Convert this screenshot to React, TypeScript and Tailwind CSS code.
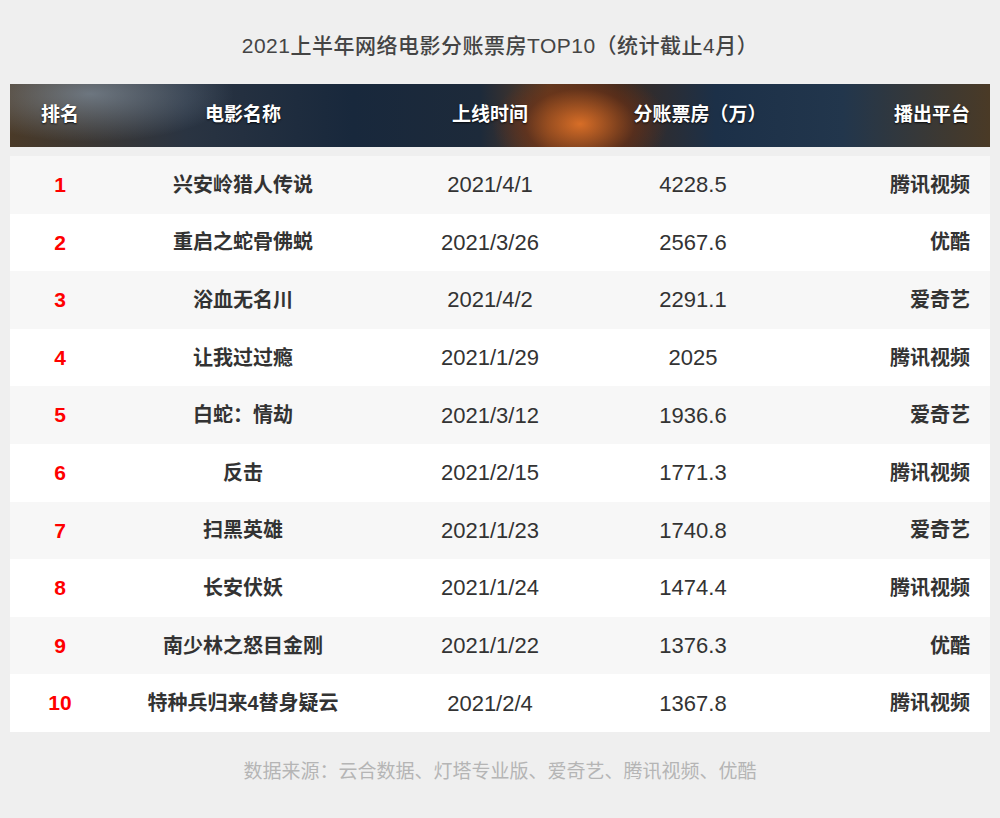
const ROWS: Array<[string, string, string, string]> = [
  ["兴安岭猎人传说", "2021/4/1", "4228.5", "腾讯视频"],
  ["重启之蛇骨佛蜕", "2021/3/26", "2567.6", "优酷"],
  ["浴血无名川", "2021/4/2", "2291.1", "爱奇艺"],
  ["让我过过瘾", "2021/1/29", "2025", "腾讯视频"],
  ["白蛇：情劫", "2021/3/12", "1936.6", "爱奇艺"],
  ["反击", "2021/2/15", "1771.3", "腾讯视频"],
  ["扫黑英雄", "2021/1/23", "1740.8", "爱奇艺"],
  ["长安伏妖", "2021/1/24", "1474.4", "腾讯视频"],
  ["南少林之怒目金刚", "2021/1/22", "1376.3", "优酷"],
  ["特种兵归来4替身疑云", "2021/2/4", "1367.8", "腾讯视频"],
];

const COLS = "grid grid-cols-[100px_266px_228px_178px_1fr] items-center";

export default function App() {
  return (
    <div
      className="w-[1000px] h-[818px] bg-[#efefef] pt-[32px]"
      style={{ fontFamily: '"Liberation Sans", "Noto Sans CJK SC", sans-serif' }}
    >
      <h1 className="text-center text-[21px] text-[#444] font-medium leading-[28px] tracking-[0.5px]">
        2021上半年网络电影分账票房TOP10（统计截止4月）
      </h1>
      <div className="mx-[10px] mt-[24px]">
        <div
          className={`${COLS} h-[63px] text-white font-bold text-[19px] [text-shadow:0_1px_2px_rgba(0,0,0,0.8)]`}
          style={{
            background:
              "radial-gradient(ellipse 110px 70px at 570px 40px, rgba(240,120,40,0.85), rgba(120,50,20,0.5) 50%, transparent 80%), radial-gradient(ellipse 180px 60px at 80px 10px, rgba(150,170,190,0.55), transparent 80%), linear-gradient(90deg, #4a3a28 0%, #2a3442 18%, #18283c 35%, #1d2a3a 48%, #5a3a22 55%, #3a2a20 62%, #1c3048 72%, #22364c 85%, #4a3a26 100%)",
          }}
        >
          <div className="text-center">排名</div>
          <div className="text-center">电影名称</div>
          <div className="text-center">上线时间</div>
          <div className="text-center pl-[14px]">分账票房（万）</div>
          <div className="text-right pr-[20px]">播出平台</div>
        </div>
        <div className="mt-[9px]">
          {ROWS.map((r, i) => (
            <div
              key={i}
              className={`${COLS} h-[57.6px] text-[#333] ${i % 2 === 0 ? "bg-[#f7f7f7]" : "bg-white"}`}
            >
              <div className="text-center text-[#f00] font-bold text-[21px]">{i + 1}</div>
              <div className="text-center font-bold text-[20px]">{r[0]}</div>
              <div className="text-center text-[22px]">{r[1]}</div>
              <div className="text-center text-[22px]">{r[2]}</div>
              <div className="text-right pr-[20px] font-bold text-[20px]">{r[3]}</div>
            </div>
          ))}
        </div>
      </div>
      <div className="text-center text-[19px] text-[#b5b5b5] mt-[26px]">
        数据来源：云合数据、灯塔专业版、爱奇艺、腾讯视频、优酷
      </div>
    </div>
  );
}
